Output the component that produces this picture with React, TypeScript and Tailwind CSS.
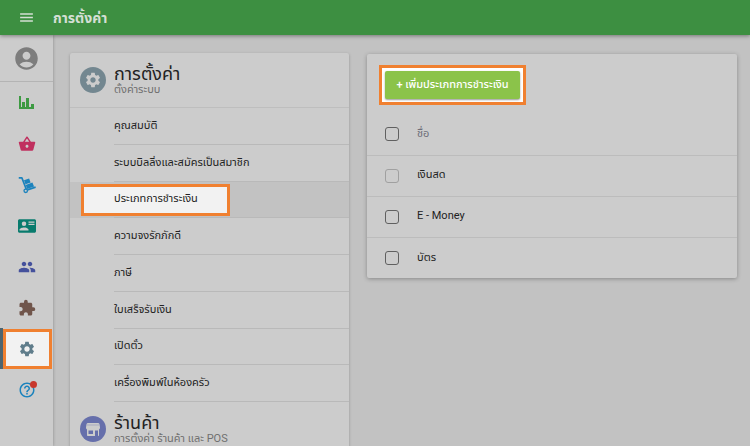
import clsx from "clsx";
import type { ReactNode } from "react";
import {
  MdAccountCircle,
  MdExtension,
  MdHelpOutline,
  MdMenu,
  MdPeople,
  MdSettings,
  MdShoppingBasket,
} from "react-icons/md";

function ChartIcon() {
  return (
    <svg viewBox="0 0 18 18" width="18" height="18" fill="currentColor">
      <path d="M1 2h2v11h1V8h3v5h1V4h3v9h2v-3h3v5H1z" />
    </svg>
  );
}

function DollyIcon() {
  return (
    <svg viewBox="0 0 24 24" width="18" height="18" fill="none" stroke="currentColor">
      <path d="M1 2.500h4.200L11 17.500" strokeWidth="2.200" strokeLinejoin="round" />
      <path d="M12.500 18.500 23.500 14.800" strokeWidth="2.200" />
      <circle cx="10.300" cy="19.700" r="2.300" strokeWidth="1.800" />
      <path d="m8 5.500 6.800-2.300 2 5.300L10 11zM10.300 11.900l8.900-3.200 2.200 5.300-9.200 3.200z" fill="currentColor" stroke="none" />
    </svg>
  );
}

function ContactCardIcon() {
  return (
    <svg viewBox="0 0 24 24" width="18" height="18" fill="currentColor">
      <path d="M2 3h20c1.050 0 2 .95 2 2v14c0 1.050-.95 2-2 2H2c-1.050 0-2-.95-2-2V5c0-1.050.95-2 2-2zm12 3v1.500h8V6h-8zm0 3v1.500h8V9h-8zm-6 4.910C6 13.910 2 15 2 17v1h12v-1c0-2-4-3.090-6-3.090zM8 6a3 3 0 1 0 0 6 3 3 0 0 0 0-6z" />
    </svg>
  );
}

function StoreIcon() {
  return (
    <svg viewBox="0 0 18 18" width="18" height="18" fill="currentColor">
      <path
        d="M4 3h10c.8 0 1.300.4 1.500 1.200l.5 3.300c.1.800-.2 1.500-1 1.900V15c0 .6-.4 1-1 1H4c-.6 0-1-.4-1-1V9.400c-.8-.4-1.100-1.100-1-1.900l.5-3.300C2.700 3.400 3.200 3 4 3zm.5 7.500V14H9v-3.500H4.500zm6.500 0V16h3v-5.500h-3z"
        fillRule="evenodd"
      />
      <path d="M3 5h12" stroke="#666fab" strokeWidth="1" strokeOpacity="0.35" />
    </svg>
  );
}

const navItems = [
  { label: "รายงาน", icon: <ChartIcon />, color: "text-[#3d9a42]" },
  { label: "สินค้า", icon: <MdShoppingBasket size={18} />, color: "text-[#c0305f]" },
  { label: "คลังสินค้า", icon: <DollyIcon />, color: "text-[#1c83bd]" },
  { label: "พนักงาน", icon: <ContactCardIcon />, color: "text-[#087b6d]" },
  { label: "ลูกค้า", icon: <MdPeople size={18} />, color: "text-[#45519c]" },
  { label: "แอป", icon: <MdExtension size={18} />, color: "text-[#70554b]" },
  { label: "การตั้งค่า", icon: <MdSettings size={18} />, color: "text-[#607d8b]", active: true },
  { label: "ช่วยเหลือ", icon: <MdHelpOutline size={18} />, color: "text-[#1c83bd]", badge: true },
];

const settings = [
  "คุณสมบัติ",
  "ระบบบิลลิ่งและสมัครเป็นสมาชิก",
  "ประเภทการชำระเงิน",
  "ความจงรักภักดี",
  "ภาษี",
  "ใบเสร็จรับเงิน",
  "เปิดตั๋ว",
  "เครื่องพิมพ์ในห้องครัว",
];

const paymentTypes = [
  { name: "เงินสด", disabled: true },
  { name: "E - Money", disabled: false },
  { name: "บัตร", disabled: false },
];

interface SectionHeaderProps {
  title: string;
  subtitle: string;
  icon: ReactNode;
  iconClass: string;
}

function SectionHeader({ title, subtitle, icon, iconClass }: SectionHeaderProps) {
  return (
    <div className="flex h-[55px] shrink-0 items-center gap-2 border-b border-[#bebebe] pl-[10px]">
      <div className={clsx("flex size-[26px] items-center justify-center rounded-full text-[#cccccc]", iconClass)}>
        {icon}
      </div>
      <div>
        <h2 className="text-lg leading-5 text-[#222222]">{title}</h2>
        <p className="text-[11px] leading-3 text-[#707070]">{subtitle}</p>
      </div>
    </div>
  );
}

function Checkbox({ label, disabled }: { label: string; disabled?: boolean }) {
  return (
    <input
      type="checkbox"
      aria-label={label}
      disabled={disabled}
      className="block size-[14px] appearance-none rounded-[3px] border border-[#606060] disabled:border-[#a0a0a0]"
    />
  );
}

export default function App() {
  return (
    <div className="flex h-screen flex-col overflow-hidden bg-[#c2c2c2] font-['Roboto','Noto_Sans_Thai',sans-serif] text-[#222222]">
      <header className="z-20 flex h-[35px] shrink-0 items-center gap-[18px] bg-[#3d8f41] pl-[18px] text-[#d4dfd4] shadow-[0_1px_4px_rgba(0,0,0,0.4)]">
        <button type="button" aria-label="เมนู">
          <MdMenu size={17} />
        </button>
        <h1 className="text-sm font-bold">การตั้งค่า</h1>
      </header>

      <div className="flex min-h-0 flex-1">
        <nav className="z-10 flex w-[53px] shrink-0 flex-col bg-[#cccccc] shadow-[0_0_3px_rgba(0,0,0,0.3)]">
          <button
            type="button"
            aria-label="บัญชี"
            className="flex h-[47px] items-center justify-center border-b border-[#b4b4b4] text-[#7d7d7d]"
          >
            <MdAccountCircle size={27} />
          </button>
          {navItems.map((item) => (
            <a
              key={item.label}
              href="#"
              aria-label={item.label}
              className={clsx(
                "relative flex h-[41px] shrink-0 items-center justify-center",
                item.color,
                item.active && "border-l-3 border-[#4d646f] pr-px",
              )}
            >
              {item.active ? (
                <span className="flex h-10 w-full items-center justify-center border-3 border-[#f08030] bg-[#f2f2f2] pr-[2px]">
                  {item.icon}
                </span>
              ) : (
                item.icon
              )}
              {item.badge && <span className="absolute top-3 right-4 size-[7px] rounded-full bg-[#c8382d]" />}
            </a>
          ))}
        </nav>

        <main className="flex min-w-0 flex-1 items-start gap-[18px] pt-[18px] pr-[13px] pl-[17px]">
          <section className="w-[279px] shrink-0 rounded-xs bg-[#cccccc] shadow-[0_1px_3px_rgba(0,0,0,0.25)]">
            <SectionHeader
              title="การตั้งค่า"
              subtitle="ตั้งค่าระบบ"
              icon={<MdSettings size={18} />}
              iconClass="bg-[#738790]"
            />
            <ul className="flex h-[294px] flex-col">
              {settings.map((label) => {
                const active = label === "ประเภทการชำระเงิน";
                return (
                  <li key={label} className={clsx("relative flex flex-1 pl-11", active && "bg-[#c2c2c2]")}>
                    {active && (
                      <span className="absolute inset-y-[2px] left-[11px] w-[149px] border-3 border-[#f08030] bg-[#f2f2f2]" />
                    )}
                    <a href="#" className="relative flex flex-1 items-center border-b border-[#b9b9b9] text-[11px] leading-4">
                      {label}
                    </a>
                  </li>
                );
              })}
            </ul>
            <SectionHeader
              title="ร้านค้า"
              subtitle="การตั้งค่า ร้านค้า และ POS"
              icon={<StoreIcon />}
              iconClass="bg-[#666fab]"
            />
          </section>

          <section className="mt-px min-w-0 flex-1 rounded-xs bg-[#cccccc] shadow-[0_1px_4px_rgba(0,0,0,0.3)]">
            <div className="px-3 pt-[11px] pb-[9px]">
              <div className="inline-flex border-3 border-[#f08030] bg-white p-[3px] align-top">
                <button
                  type="button"
                  className="h-7 w-[135px] rounded-xs bg-[#8bc34a] text-[11px] font-medium whitespace-nowrap text-white shadow-[0_1px_2px_rgba(0,0,0,0.4)]"
                >
                  + เพิ่มประเภทการชำระเงิน
                </button>
              </div>
            </div>
            <table className="w-full text-left text-[11px]">
              <thead>
                <tr className="h-[41px] border-b border-[#bcbcbc]">
                  <th className="w-[50px] pl-[18px]">
                    <Checkbox label="เลือกทั้งหมด" />
                  </th>
                  <th className="font-normal text-[#6d6d78]">ชื่อ</th>
                </tr>
              </thead>
              <tbody>
                {paymentTypes.map((type) => (
                  <tr key={type.name} className="h-[41px] border-b border-[#bcbcbc] last:border-b-0">
                    <td className="pl-[18px]">
                      <Checkbox label={type.name} disabled={type.disabled} />
                    </td>
                    <td>{type.name}</td>
                  </tr>
                ))}
              </tbody>
            </table>
          </section>
        </main>
      </div>
    </div>
  );
}
